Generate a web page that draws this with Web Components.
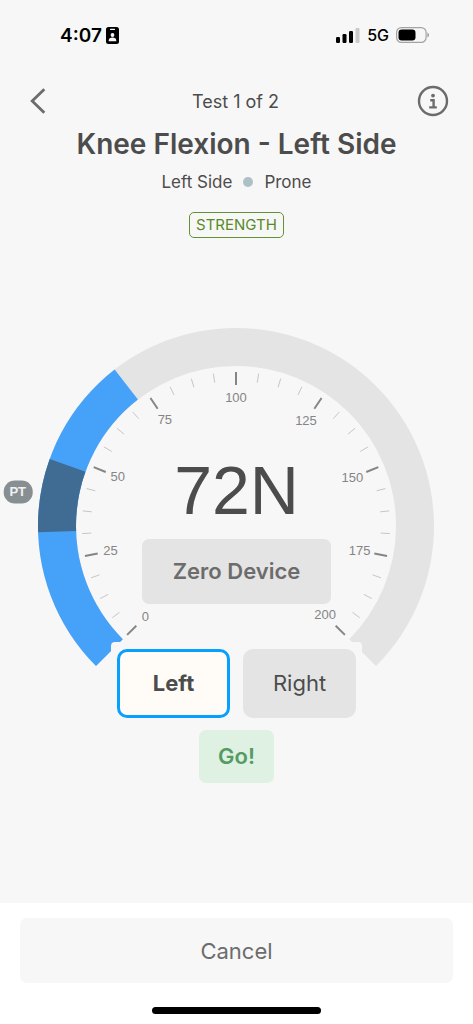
<!DOCTYPE html>
<html lang="en">
<head>
<meta charset="utf-8">
<meta name="viewport" content="width=device-width, initial-scale=1">
<title>Knee Flexion - Left Side</title>
<style>
  body {
    margin: 0;
    background: #f7f7f7;
    color: #4c4c4c;
    font-family: Inter, "Liberation Sans", sans-serif;
  }
</style>
</head>
<body>
<strength-test></strength-test>

<script>
  // Phone status bar: clock on the left, signal and battery on the right
  class StatusBar extends HTMLElement {
    constructor() {
      super();
      this.attachShadow({ mode: "open" });
      this.shadowRoot.innerHTML = `
        <style>
          :host {
            display: flex;
            align-items: center;
            justify-content: space-between;
            height: 70px;
            padding: 0 43px 0 60px;
            color: #000;
          }

          div {
            display: flex;
            align-items: center;
          }

          .clock {
            gap: 4px;
            font-size: 19px;
            font-weight: 600;
          }

          .state {
            gap: 7px;
            font-size: 16px;
            font-weight: 500;
          }

          svg {
            display: block;
          }
        </style>
        <div class="clock">
          <slot></slot>
          <svg width="13" height="17" viewBox="0 0 13 17" aria-hidden="true">
            <rect width="13" height="17" rx="2.5" />
            <rect x="4" y="1.8" width="5" height="1.2" rx=".6" fill="#f7f7f7" />
            <circle cx="6.5" cy="8" r="1.9" fill="#f7f7f7" />
            <path d="M2.8 14.2v-1c0-1.6 1.5-2.6 3.7-2.6s3.7 1 3.7 2.6v1z" fill="#f7f7f7" />
          </svg>
        </div>
        <div class="state">
          <svg width="24" height="15" viewBox="0 0 24 15" aria-hidden="true">
            <rect x="0" y="9" width="4" height="6" rx="1.2" />
            <rect x="6.5" y="6" width="4" height="9" rx="1.2" />
            <rect x="13" y="3" width="4" height="12" rx="1.2" />
            <rect x="19.5" y="0" width="4" height="15" rx="1.2" fill="#cacaca" />
          </svg>
          <slot name="network"></slot>
          <svg width="34" height="16" viewBox="0 0 34 16" aria-hidden="true">
            <rect x=".6" y=".6" width="29.5" height="14.8" rx="4.8" fill="none" stroke="#a3a3a3" stroke-width="1.2" />
            <rect x="2.5" y="2.5" width="17" height="11" rx="3.2" />
            <path d="M31.5 5.5c1.8.8 1.8 4.2 0 5z" fill="#8a8a8a" />
          </svg>
        </div>
      `;
    }
  }

  class TestHeader extends HTMLElement {
    constructor() {
      super();
      this.attachShadow({ mode: "open" });
      this.shadowRoot.innerHTML = `
        <style>
          :host {
            display: block;
            text-align: center;
          }

          nav {
            display: flex;
            align-items: center;
            justify-content: space-between;
            height: 32px;
            margin-top: 15px;
            padding: 0 24px 0 22px;
            font-size: 18px;
          }

          button {
            display: grid;
            place-items: center;
            width: 32px;
            height: 32px;
            padding: 0;
            border: 0;
            background: none;
            color: #6c6c6c;
          }

          h1 {
            margin: 7px 0 0;
            font-size: 28px;
            font-weight: 600;
            line-height: 40px;
          }

          .position {
            display: flex;
            align-items: center;
            justify-content: center;
            gap: 11px;
            margin: 6px 0 0;
            font-size: 17px;
            line-height: 24px;
          }

          .dot {
            width: 10px;
            height: 10px;
            border-radius: 50%;
            background: #adc0c5;
          }

          .kind {
            display: inline-block;
            box-sizing: border-box;
            height: 26px;
            margin-top: 18px;
            padding: 0 6px;
            border: 1px solid #629330;
            border-radius: 5px;
            color: #598a26;
            font-size: 15px;
            line-height: 24px;
          }
        </style>
        <nav>
          <button type="button" aria-label="Back">
            <svg width="16" height="26" viewBox="0 0 16 26" fill="none" stroke="currentColor" stroke-width="2.8" aria-hidden="true">
              <path d="M14.3 1.2L2.2 13l12.1 11.8" />
            </svg>
          </button>
          <slot name="step"></slot>
          <button type="button" aria-label="Information">
            <svg width="32" height="32" viewBox="0 0 32 32" aria-hidden="true">
              <circle cx="16" cy="16" r="14" fill="none" stroke="currentColor" stroke-width="2.4" />
              <circle cx="16" cy="10.6" r="1.9" fill="currentColor" />
              <path d="M13.2 15.3h3.4v7M12.2 22.4h7.6" fill="none" stroke="currentColor" stroke-width="2.4" />
            </svg>
          </button>
        </nav>
        <h1><slot name="title"></slot></h1>
        <p class="position">
          <slot name="side"></slot>
          <span class="dot"></span>
          <slot name="pose"></slot>
        </p>
        <span class="kind"><slot name="kind"></slot></span>
      `;
    }
  }

  // 270 degree dial. Attributes: value, max, band-from, band-to
  class ForceGauge extends HTMLElement {
    constructor() {
      super();
      this._cx = 236;
      this._cy = 198;
      this.attachShadow({ mode: "open" });
      this.shadowRoot.innerHTML = `
        <style>
          :host {
            display: grid;
          }

          svg, .content {
            grid-area: 1 / 1;
          }

          svg {
            display: block;
            width: 100%;
            font-family: "Liberation Sans", Arial, sans-serif;
          }

          .content {
            display: flex;
            flex-direction: column;
            align-items: center;
            justify-content: flex-end;
            padding-bottom: 62px;
          }
        </style>
        <svg viewBox="0 0 473 338"></svg>
        <div class="content"><slot></slot></div>
      `;
    }

    connectedCallback() {
      this._max = Number(this.getAttribute("max"));
      this._render();
    }

    _point(value, radius) {
      const angle = ((value / this._max) * 270 - 135) * Math.PI / 180;
      const x = this._cx + radius * Math.sin(angle);
      const y = this._cy - radius * Math.cos(angle);
      return [x.toFixed(2), y.toFixed(2)];
    }

    _arc(from, to, color) {
      const outer = 198;
      const inner = 160;
      const large = (to - from) / this._max * 270 > 180 ? 1 : 0;
      return `<path fill="${color}" d="M${this._point(from, outer)}
        A${outer} ${outer} 0 ${large} 1 ${this._point(to, outer)}
        L${this._point(to, inner)}
        A${inner} ${inner} 0 ${large} 0 ${this._point(from, inner)}Z" />`;
    }

    _ticks() {
      let out = "";
      for (let i = 0; i <= 32; i++) {
        const value = i * this._max / 32;
        const major = i % 4 === 0;
        const [x1, y1] = this._point(value, 154);
        const [x2, y2] = this._point(value, major ? 141 : 145);
        out += `<line x1="${x1}" y1="${y1}" x2="${x2}" y2="${y2}"
          stroke="${major ? "#858585" : "#c6c6c6"}" stroke-width="${major ? 2 : 1}" />`;
        if (major) {
          // three-digit labels on the right need a little more room from their ticks
          const [x, y] = this._point(value, value > this._max / 2 ? 126 : 128);
          out += `<text x="${x}" y="${y}" dy="4" font-size="13" fill="#858585" text-anchor="middle">${value}</text>`;
        }
      }
      return out;
    }

    _badge(value) {
      const [x, y] = this._point(value, 221);
      return `<rect x="${x - 14}" y="${y - 11}" width="29" height="23" rx="11" fill="#888f93" />
        <text x="${x}" y="${y}" dy="5" font-size="13" font-weight="700" fill="#f0f2f3" text-anchor="middle">PT</text>`;
    }

    _render() {
      const value = Number(this.getAttribute("value"));
      const from = Number(this.getAttribute("band-from"));
      const to = Number(this.getAttribute("band-to"));
      this.shadowRoot.querySelector("svg").innerHTML =
        this._arc(0, this._max, "#e4e4e4") +
        this._arc(0, value, "#46a1f9") +
        this._arc(from, to, "#406b92") +
        this._ticks() +
        this._badge((from + to) / 2);
    }
  }

  // Button whose look is picked with the kind attribute
  class AppButton extends HTMLElement {
    constructor() {
      super();
      this.attachShadow({ mode: "open" });
      this.shadowRoot.innerHTML = `
        <style>
          :host {
            display: block;
          }

          button {
            box-sizing: border-box;
            width: 100%;
            height: 65px;
            padding: 0 31px 2px;
            border: 0;
            border-radius: 7px;
            background: #e4e4e4;
            color: #6c6c6c;
            font: 600 22px Inter, "Liberation Sans", sans-serif;
            white-space: nowrap;
          }

          :host([kind="choice"]) button {
            width: 113px;
            height: 69px;
            padding: 0 0 2px;
            border-radius: 10px;
            color: #4c4c4c;
            font-weight: 400;
          }

          :host([kind="choice"]) button[aria-pressed="true"] {
            border: 3px solid #08a0ff;
            background: #fffcf8;
            font-weight: 700;
          }

          :host([kind="go"]) button {
            height: 53px;
            padding: 0 19px 2px;
            background: #dff1e3;
            color: #559b64;
          }

          :host([kind="cancel"]) button {
            padding: 0;
            background: #f7f7f7;
            font-weight: 400;
          }
        </style>
        <button type="button"><slot></slot></button>
      `;
    }

    connectedCallback() {
      if (this.getAttribute("kind") === "choice") {
        this.shadowRoot.querySelector("button")
          .setAttribute("aria-pressed", this.hasAttribute("selected"));
      }
    }
  }

  class BottomBar extends HTMLElement {
    constructor() {
      super();
      this.attachShadow({ mode: "open" });
      this.shadowRoot.innerHTML = `
        <style>
          :host {
            display: block;
            padding: 15px 20px 10px;
            background: #fff;
          }

          .home {
            width: 169px;
            height: 7px;
            margin: 24px auto 0;
            border-radius: 4px;
            background: #000;
          }
        </style>
        <slot></slot>
        <div class="home"></div>
      `;
    }
  }

  class StrengthTest extends HTMLElement {
    constructor() {
      super();
      this.attachShadow({ mode: "open" });
      this.shadowRoot.innerHTML = `
        <style>
          :host {
            display: flex;
            flex-direction: column;
            min-height: 100vh;
          }

          main {
            flex: 1;
            display: flex;
            flex-direction: column;
            align-items: center;
            padding-bottom: 40px;
          }

          force-gauge {
            width: 100%;
            max-width: 480px;
            margin-top: 90px;
          }

          .reading {
            margin-bottom: 11px;
            font: 68px/76px "Liberation Sans", Arial, sans-serif;
          }

          /* Sits over the open ends of the dial */
          .sides {
            display: flex;
            gap: 13px;
            margin-top: -24px;
            padding: 7px 6px 6px;
            border-radius: 4px;
            background: #f7f7f7;
            z-index: 1;
          }

          .go {
            margin-top: 6px;
          }
        </style>
        <status-bar>4:07<span slot="network">5G</span></status-bar>
        <test-header>
          <span slot="step">Test 1 of 2</span>
          <span slot="title">Knee Flexion - Left Side</span>
          <span slot="side">Left Side</span>
          <span slot="pose">Prone</span>
          <span slot="kind">STRENGTH</span>
        </test-header>
        <main>
          <force-gauge value="72" max="200" band-from="32" band-to="48">
            <div class="reading">72N</div>
            <app-button>Zero Device</app-button>
          </force-gauge>
          <div class="sides">
            <app-button kind="choice" selected>Left</app-button>
            <app-button kind="choice">Right</app-button>
          </div>
          <app-button class="go" kind="go">Go!</app-button>
        </main>
        <bottom-bar>
          <app-button kind="cancel">Cancel</app-button>
        </bottom-bar>
      `;
    }
  }

  customElements.define("status-bar", StatusBar);
  customElements.define("test-header", TestHeader);
  customElements.define("force-gauge", ForceGauge);
  customElements.define("app-button", AppButton);
  customElements.define("bottom-bar", BottomBar);
  customElements.define("strength-test", StrengthTest);
</script>
</body>
</html>
